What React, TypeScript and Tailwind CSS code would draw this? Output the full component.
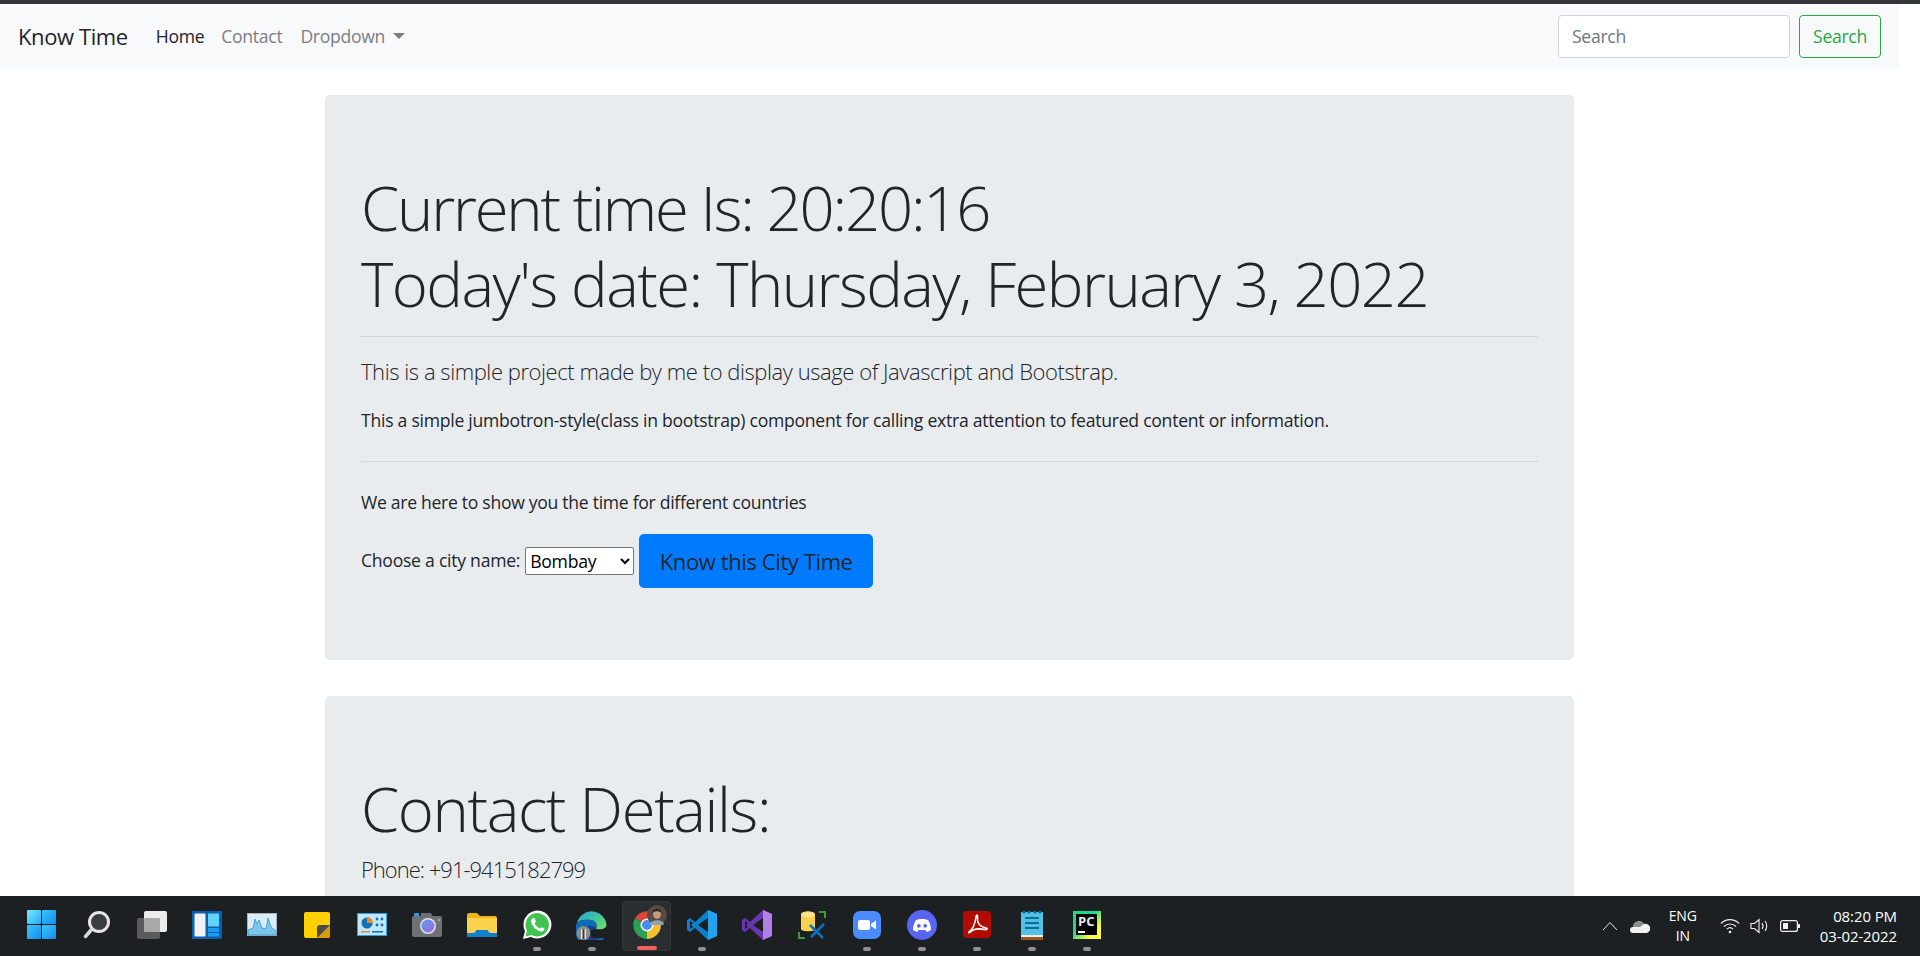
const font = { fontFamily: '"Open Sans", "Noto Sans", sans-serif' };

function WinLogo() {
  return (
    <svg width="30" height="30" viewBox="0 0 30 30">
      <defs>
        <linearGradient id="w1" x1="0" y1="0" x2="1" y2="1">
          <stop offset="0" stopColor="#7cecfb" />
          <stop offset="1" stopColor="#1fa9f5" />
        </linearGradient>
        <linearGradient id="w2" x1="0" y1="0" x2="1" y2="1">
          <stop offset="0" stopColor="#3bc6fb" />
          <stop offset="1" stopColor="#0f8df0" />
        </linearGradient>
      </defs>
      <rect x="0" y="0" width="14" height="14" rx="1" fill="url(#w1)" />
      <rect x="15" y="0" width="14" height="14" rx="1" fill="url(#w2)" />
      <rect x="0" y="15" width="14" height="14" rx="1" fill="url(#w2)" />
      <rect x="15" y="15" width="14" height="14" rx="1" fill="url(#w2)" />
    </svg>
  );
}

function SearchIcon() {
  return (
    <svg width="28" height="30" viewBox="0 0 28 30" fill="none">
      <circle cx="16" cy="12" r="9.5" fill="#3a3d40" stroke="#e6e6e6" strokeWidth="3" />
      <path d="M9 19 L2.5 26.5" stroke="#d8d8d8" strokeWidth="3.5" strokeLinecap="round" />
    </svg>
  );
}

function TaskViewIcon() {
  return (
    <svg width="30" height="28" viewBox="0 0 30 28">
      <rect x="0" y="7" width="23" height="21" rx="2" fill="#5a5a5a" />
      <rect x="7" y="0" width="23" height="21" rx="2" fill="#ececec" />
      <rect x="7" y="7" width="16" height="14" rx="1" fill="#a8a8a8" />
    </svg>
  );
}

function WidgetsIcon() {
  return (
    <svg width="30" height="28" viewBox="0 0 30 28">
      <rect width="30" height="28" rx="1" fill="#0b5fae" />
      <rect x="2.5" y="2.5" width="11" height="23" rx="1" fill="#f2f2f2" />
      <rect x="16" y="2.5" width="11" height="13" fill="#62d3fb" />
      <rect x="16" y="17" width="11" height="4" fill="#1e9cf0" />
      <rect x="16" y="22" width="11" height="3.5" fill="#1e9cf0" />
    </svg>
  );
}

function MonitorIcon() {
  return (
    <svg width="30" height="23" viewBox="0 0 30 23">
      <rect width="30" height="23" fill="#a9b3bd" />
      <rect x="1" y="1" width="28" height="21" fill="#dcecf7" />
      <path d="M1 17 L6 15 L8 6 L10 11 L12 7 L15 15 L19 16 L21 5 L24 14 L29 18 V22 H1 Z" fill="#7cc6ea" stroke="#2a9bd8" strokeWidth="0.8" />
    </svg>
  );
}

function StickyIcon() {
  return (
    <svg width="26" height="26" viewBox="0 0 26 26">
      <rect width="26" height="26" rx="2" fill="#fdd000" />
      <path d="M13 26 V16 Q13 13 16 13 H26 V24 Q26 26 24 26 Z" fill="#4a4a48" />
      <path d="M13 26 L26 13 V24 Q26 26 24 26 Z" fill="#d99a0a" />
    </svg>
  );
}

function PanelIcon() {
  return (
    <svg width="30" height="23" viewBox="0 0 30 23">
      <rect width="30" height="23" fill="#2b9fe0" />
      <rect x="1" y="1" width="28" height="21" fill="#bfe6f9" />
      <circle cx="10" cy="10" r="5.5" fill="#1170b8" />
      <path d="M10 10 V4 A6 6 0 0 1 16 10 Z" fill="#ef8a22" />
      <circle cx="20" cy="6" r="1.4" fill="#1170b8" />
      <circle cx="25" cy="6" r="1.4" fill="#1170b8" />
      <circle cx="20" cy="12" r="1.4" fill="#1170b8" />
      <circle cx="25" cy="12" r="1.4" fill="#1170b8" />
      <rect x="4" y="18" width="9" height="1.5" fill="#ef8a22" />
      <rect x="15" y="18" width="11" height="1.5" fill="#1170b8" />
    </svg>
  );
}

function CameraIcon() {
  return (
    <svg width="30" height="24" viewBox="0 0 30 24">
      <defs>
        <linearGradient id="lens" x1="0" y1="0" x2="1" y2="1">
          <stop offset="0" stopColor="#4aa4f0" />
          <stop offset="1" stopColor="#b25fe0" />
        </linearGradient>
      </defs>
      <rect x="2" y="0" width="5" height="4" rx="1" fill="#2c9be0" />
      <path d="M9 0 H19 L21 4 H9 Z" fill="#6c6f74" />
      <rect y="3" width="30" height="21" rx="2" fill="#6e7277" />
      <circle cx="16" cy="13" r="8" fill="#dfe0e2" />
      <circle cx="16" cy="13" r="6.5" fill="url(#lens)" />
      <circle cx="27" cy="7" r="1" fill="#bbb" />
    </svg>
  );
}

function FolderIcon() {
  return (
    <svg width="30" height="24" viewBox="0 0 30 24">
      <path d="M0 2 Q0 0 2 0 H10 L13 3 H28 Q30 3 30 5 V24 H0 Z" fill="#f2b21c" />
      <rect y="5" width="30" height="19" rx="1" fill="#fbd24e" />
      <path d="M0 24 V20 H6 Q9 20 9 17 H21 Q21 20 24 20 H30 V24 Z" fill="#0f7fd0" />
    </svg>
  );
}

function WhatsappIcon() {
  return (
    <svg width="30" height="30" viewBox="0 0 30 30">
      <path d="M1 29 L3 21 A14 14 0 1 1 9 27 Z" fill="#fff" />
      <path d="M3.5 26.5 L5 20.5 A11.7 11.7 0 1 1 9.5 25 Z" fill="#40c351" />
      <path d="M11 8 C9 9 8.5 11.5 10 14.5 C12 18 15 20.5 18.5 21.5 C20.5 22 22 20.5 22.5 19 L19.5 17 L18 18.5 C16 17.8 13.5 15.5 12.5 13 L14 11.5 L12.5 8 Z" fill="#fff" />
    </svg>
  );
}

function EdgeIcon() {
  return (
    <svg width="31" height="31" viewBox="0 0 31 31">
      <defs>
        <linearGradient id="e1" x1="0" y1="0" x2="1" y2="1">
          <stop offset="0" stopColor="#1fa5dc" />
          <stop offset="1" stopColor="#6de35f" />
        </linearGradient>
      </defs>
      <path d="M1 14 A15 15 0 0 1 30.5 15.5 C30.5 20 25 21 20 20 C22 16 20 12 15 11 C9 10 3 11 1 14 Z" fill="url(#e1)" />
      <path d="M1 14 C3 11 9 10 15 11 C20 12 22 16 20 20 C16 20 13 22 12 25 L16 30 L28 29 A15 15 0 0 1 1 14 Z" fill="#0f6cb8" />
      <path d="M12 17 C15 16 19 17 20 20 C16 20 13 22 13 25 C13 28 18 30 24 29 A15 15 0 0 1 9 29 C5 24 7 19 12 17 Z" fill="#1b3f8a" />
      <circle cx="7.5" cy="24" r="7" fill="#8d8d88" />
      <rect x="5" y="20" width="5" height="10" fill="#e9e7df" />
      <rect x="6.5" y="20" width="2" height="10" fill="#3b3b3b" />
    </svg>
  );
}

function ChromeIcon() {
  return (
    <svg width="28" height="28" viewBox="0 0 28 28">
      <path d="M14 14 L2 7.2 A14 14 0 0 1 26.1 7 Z" fill="#d9453a" />
      <path d="M14 14 L26.1 7 A14 14 0 0 1 14 28 Z" fill="#f6c02d" />
      <path d="M14 14 L14 28 A14 14 0 0 1 2 7.2 Z" fill="#2c9f52" />
      <circle cx="14" cy="14" r="6.5" fill="#fff" />
      <circle cx="14" cy="14" r="5" fill="#4a8de8" />
    </svg>
  );
}

function AvatarBadge() {
  return (
    <svg width="20" height="20" viewBox="0 0 20 20" className="absolute right-[3px] top-[3px]">
      <circle cx="10" cy="10" r="10" fill="#574b42" />
      <path d="M3 19 C4 14 16 14 17 19 A10 10 0 0 1 3 19 Z" fill="#8fa3b5" />
      <ellipse cx="10" cy="9" rx="4" ry="5" fill="#c79a7c" />
      <path d="M5.5 8 C5 2.5 15 2.5 14.5 8 C12 5.5 8 5.5 5.5 8 Z" fill="#2c241f" />
    </svg>
  );
}

function VscodeIcon() {
  return (
    <svg width="30" height="30" viewBox="0 0 30 30">
      <path d="M21 0 L30 4 V26 L21 30 L8 18 L3 22 L0 20 V10 L3 8 L8 12 Z" fill="#0e7fcb" />
      <path d="M21 0 L30 4 V26 L21 30 Z" fill="#23a3ec" />
      <path d="M21 8 V22 L11 15 Z" fill="#1b1f20" />
      <path d="M3 11 L6 13 L4 15 L6 17 L3 19 Z" fill="#1b1f20" />
    </svg>
  );
}

function StudioIcon() {
  return (
    <svg width="30" height="30" viewBox="0 0 30 30">
      <path d="M21 0 L30 4 V26 L21 30 L8 18 L3 22 L0 20 V10 L3 8 L8 12 Z" fill="#6a35b0" />
      <path d="M21 0 L30 4 V26 L21 30 Z" fill="#b27fe8" />
      <path d="M21 8 V22 L11 15 Z" fill="#1b1f20" />
      <path d="M3 11 L6 13 L4 15 L6 17 L3 19 Z" fill="#1b1f20" />
    </svg>
  );
}

function DataToolIcon() {
  return (
    <svg width="28" height="28" viewBox="0 0 28 28" fill="none">
      <path d="M3 3 C3 -0.5 17 -0.5 17 3 V18 C17 21 3 21 3 18 Z" fill="#f4d24a" />
      <ellipse cx="10" cy="3.5" rx="7" ry="3" fill="#f9e28a" />
      <path d="M21 1 H27 V7 M1 21 V27 H7" stroke="#3f9c35" strokeWidth="2" />
      <path d="M12 14 L25 27 M26 13 L13 26" stroke="#0c71c3" strokeWidth="2.6" />
    </svg>
  );
}

function ZoomIcon() {
  return (
    <svg width="28" height="28" viewBox="0 0 28 28">
      <rect width="28" height="28" rx="7" fill="#4a8cff" />
      <rect x="5" y="9" width="12" height="10" rx="2" fill="#fff" />
      <path d="M18 13 L23 9.5 V18.5 L18 15 Z" fill="#fff" />
    </svg>
  );
}

function DiscordIcon() {
  return (
    <svg width="30" height="30" viewBox="0 0 30 30">
      <circle cx="15" cy="15" r="15" fill="#5865f2" />
      <path d="M9 10 C12 8.5 18 8.5 21 10 C23 13 24 16.5 24 20 C22.5 21 21 21.5 19.5 22 L18.5 20 H11.5 L10.5 22 C9 21.5 7.5 21 6 20 C6 16.5 7 13 9 10 Z" fill="#fff" />
      <circle cx="11.8" cy="15.8" r="1.9" fill="#5865f2" />
      <circle cx="18.2" cy="15.8" r="1.9" fill="#5865f2" />
    </svg>
  );
}

function AcrobatIcon() {
  return (
    <svg width="28" height="27" viewBox="0 0 28 27" fill="none">
      <rect width="28" height="27" rx="4" fill="#b30b00" />
      <path d="M6 21 C9 19 12 13 13 6 C13.5 3 15 4 14.5 7 C14 12 17 16 23 17 C25 17.5 24 19 22 18.5 C17 17.5 11 17.5 8 20.5 C6.5 22 5 22 6 21 Z" stroke="#fff" strokeWidth="1.6" />
    </svg>
  );
}

function NotepadIcon() {
  return (
    <svg width="22" height="30" viewBox="0 0 22 30">
      <rect y="2" width="22" height="26" fill="#56bfe6" />
      <rect y="25" width="22" height="2" fill="#eee" />
      <rect y="27" width="22" height="3" fill="#9a5a1e" />
      <circle cx="3" cy="2" r="1.6" fill="#0e6d94" />
      <circle cx="8" cy="2" r="1.6" fill="#0e6d94" />
      <circle cx="14" cy="2" r="1.6" fill="#0e6d94" />
      <circle cx="19" cy="2" r="1.6" fill="#0e6d94" />
      <rect x="4" y="7" width="14" height="2" fill="#0e6d94" />
      <rect x="4" y="12" width="14" height="2" fill="#0e6d94" />
      <rect x="4" y="17" width="14" height="2" fill="#0e6d94" />
    </svg>
  );
}

function PycharmIcon() {
  return (
    <div className="flex h-[28px] w-[28px] bg-[linear-gradient(135deg,#21d789_40%,#fcf84a_75%)] p-[3.5px]">
      <div className="h-full w-full bg-black pl-[2px] text-[13px] font-bold leading-[14px] text-[#e8e8e8]">
        PC
        <div className="mt-[3px] h-[1.5px] w-[7px] bg-white" />
      </div>
    </div>
  );
}

const taskbarIcons = [
  { id: "start", icon: <WinLogo /> },
  { id: "search", icon: <SearchIcon /> },
  { id: "taskview", icon: <TaskViewIcon /> },
  { id: "widgets", icon: <WidgetsIcon /> },
  { id: "monitor", icon: <MonitorIcon /> },
  { id: "sticky", icon: <StickyIcon /> },
  { id: "panel", icon: <PanelIcon /> },
  { id: "camera", icon: <CameraIcon /> },
  { id: "folder", icon: <FolderIcon /> },
  { id: "whatsapp", icon: <WhatsappIcon />, dot: true },
  { id: "edge", icon: <EdgeIcon />, dot: true },
  { id: "chrome", icon: <ChromeIcon />, active: true },
  { id: "vscode", icon: <VscodeIcon />, dot: true },
  { id: "studio", icon: <StudioIcon /> },
  { id: "datatool", icon: <DataToolIcon /> },
  { id: "zoom", icon: <ZoomIcon />, dot: true },
  { id: "discord", icon: <DiscordIcon />, dot: true },
  { id: "acrobat", icon: <AcrobatIcon />, dot: true },
  { id: "notepad", icon: <NotepadIcon />, dot: true },
  { id: "pycharm", icon: <PycharmIcon />, dot: true },
];

function Taskbar() {
  return (
    <div className="flex h-[60px] shrink-0 items-center bg-[#1c2022] pl-[14px] text-white">
      {taskbarIcons.map((item) => (
        <div
          key={item.id}
          className={`relative flex h-[50px] shrink-0 items-center justify-center rounded-[4px] pb-[3px] ${item.active ? "mx-[3px] w-[49px] border border-[#34383a] bg-[#2a2e30]" : "w-[55px]"}`}
        >
          {item.icon}
          {item.dot && <span className="absolute bottom-0 left-1/2 h-[4px] w-[8px] -translate-x-1/2 rounded-full bg-[#8e9091]" />}
          {item.active && (
            <>
              <span className="absolute bottom-0 left-1/2 h-[4px] w-[20px] -translate-x-1/2 rounded-full bg-[#f0605f]" />
              <AvatarBadge />
            </>
          )}
        </div>
      ))}
      <div className="ml-auto flex items-center pr-[23px]">
        <svg width="16" height="10" viewBox="0 0 16 10" fill="none" className="mr-[12px]">
          <path d="M1 9 L8 1.5 L15 9" stroke="#e4e4e4" strokeWidth="1" />
        </svg>
        <svg width="20" height="14" viewBox="0 0 20 14" className="mr-[18px]">
          <path d="M3 14 A3 3 0 0 1 3 8 A6 6 0 0 1 14 5 A4.5 4.5 0 0 1 17 14 Z" fill="#f1f1f1" />
          <path d="M3 8 A6 6 0 0 1 14 5 L10 8 Z" fill="#8b8d8e" />
        </svg>
        <div className="mr-[22px] flex w-[30px] flex-col items-center text-[14px] leading-[20px] tracking-[-0.2px]">
          <span>ENG</span>
          <span>IN</span>
        </div>
        <svg width="20" height="16" viewBox="0 0 20 16" fill="none" stroke="#f0f0f0" strokeWidth="1.2" className="mr-[10px]">
          <path d="M1 5.5 A12.5 12.5 0 0 1 19 5.5" />
          <path d="M4 8.5 A8.5 8.5 0 0 1 16 8.5" />
          <path d="M7 11 A4.5 4.5 0 0 1 13 11" />
          <circle cx="10" cy="14" r="1.3" fill="#f0f0f0" stroke="none" />
        </svg>
        <svg width="20" height="16" viewBox="0 0 20 16" fill="none" stroke="#f0f0f0" strokeWidth="1.1" className="mr-[10px]">
          <path d="M1 5.5 H4.5 L9 1.5 V14.5 L4.5 10.5 H1 Z" />
          <path d="M12 5 Q14 8 12 11" />
          <path d="M15 3 Q18.5 8 15 13" />
        </svg>
        <svg width="20" height="12" viewBox="0 0 20 12" fill="none" className="mr-[20px]">
          <rect x="0.6" y="0.6" width="16.8" height="10.8" rx="2" stroke="#f0f0f0" strokeWidth="1.2" />
          <rect x="3" y="3" width="5" height="6" fill="#f0f0f0" />
          <rect x="18" y="4" width="2" height="4" rx="0.5" fill="#f0f0f0" />
        </svg>
        <div className="flex flex-col items-end text-[15px] leading-[20px] tracking-[-0.1px]">
          <span>08:20 PM</span>
          <span>03-02-2022</span>
        </div>
      </div>
    </div>
  );
}

function Navbar() {
  return (
    <nav className="flex h-[64px] w-[1899px] shrink-0 items-center bg-[#f8f9fa] px-[18px]">
      <a className="mr-[28px] text-[22px] leading-[30px] tracking-[-0.4px] text-[#212529]">Know Time</a>
      <a className="mr-[17px] text-[17.6px] tracking-[-0.3px] text-[#212529]">Home</a>
      <a className="mr-[18px] text-[17.6px] tracking-[-0.3px] text-[#7c7e80]">Contact</a>
      <a className="flex items-center text-[17.6px] tracking-[-0.3px] text-[#7c7e80]">
        Dropdown
        <span className="ml-[8px] h-0 w-0 border-x-[6px] border-t-[6px] border-x-transparent border-t-[#7c7e80]" />
      </a>
      <div className="ml-auto flex items-center gap-[9px]">
        <input
          placeholder="Search"
          className="h-[43px] w-[232px] rounded-[4px] border border-[#ced4da] bg-white px-[13px] text-[17.6px] tracking-[-0.3px] placeholder:text-[#6c757d]"
        />
        <button className="h-[43px] w-[82px] rounded-[4px] border border-[#28a745] text-[17.6px] tracking-[-0.3px] text-[#28a745]">Search</button>
      </div>
    </nav>
  );
}

export default function App() {
  return (
    <div className="flex h-screen flex-col overflow-hidden bg-white text-[#212529]" style={font}>
      <div className="h-[4px] shrink-0 bg-[#35363a]" />
      <Navbar />
      <main className="flex min-h-0 w-[1899px] flex-1 flex-col gap-[36px] overflow-hidden px-[325px] pt-[27px]">
        <section className="h-[565px] shrink-0 rounded-[5px] bg-[#e9ecef] px-[36px] pt-[74px]">
          <h1 className="text-[61.6px] font-light leading-[76px] tracking-[-1.55px]">
            <span className="tracking-[-2.2px]">Current time Is: 20:20:16</span>
            <br />
            Today's date: Thursday, February 3, 2022
          </h1>
          <hr className="mt-[15px] border-[#d3d6d9]" />
          <p className="mt-[18px] text-[22px] font-light leading-[33px] tracking-[-0.44px]">This is a simple project made by me to display usage of Javascript and Bootstrap.</p>
          <p className="mt-[19px] text-[17.6px] leading-[26px] tracking-[-0.26px]">This a simple jumbotron-style(class in bootstrap) component for calling extra attention to featured content or information.</p>
          <hr className="mt-[28px] border-[#d3d6d9]" />
          <p className="mt-[27px] text-[17.6px] leading-[26px] tracking-[-0.3px]">We are here to show you the time for different countries</p>
          <div className="mt-[19px] flex items-center">
            <label className="mr-[5px] pb-[2px] text-[17.6px] tracking-[-0.26px]">Choose a city name:</label>
            <select className="h-[28px] w-[109px] rounded-[2px] border border-[#767676] bg-white text-[17.6px] leading-[22px] tracking-[-0.26px] text-black [appearance:auto]">
              <option>Bombay</option>
            </select>
            <button className="ml-[5px] h-[54px] w-[234px] rounded-[5px] bg-[#007bff] text-[22px] tracking-[-0.4px] text-[#212529]">Know this City Time</button>
          </div>
        </section>
        <section className="shrink-0 rounded-[5px] bg-[#e9ecef] px-[36px] py-[74px]">
          <h1 className="text-[61.6px] font-light leading-[76px] tracking-[-1.4px]">Contact Details:</h1>
          <p className="mt-[7px] text-[22px] font-light leading-[33px] tracking-[-1px]">Phone: +91-9415182799</p>
        </section>
      </main>
      <Taskbar />
    </div>
  );
}
